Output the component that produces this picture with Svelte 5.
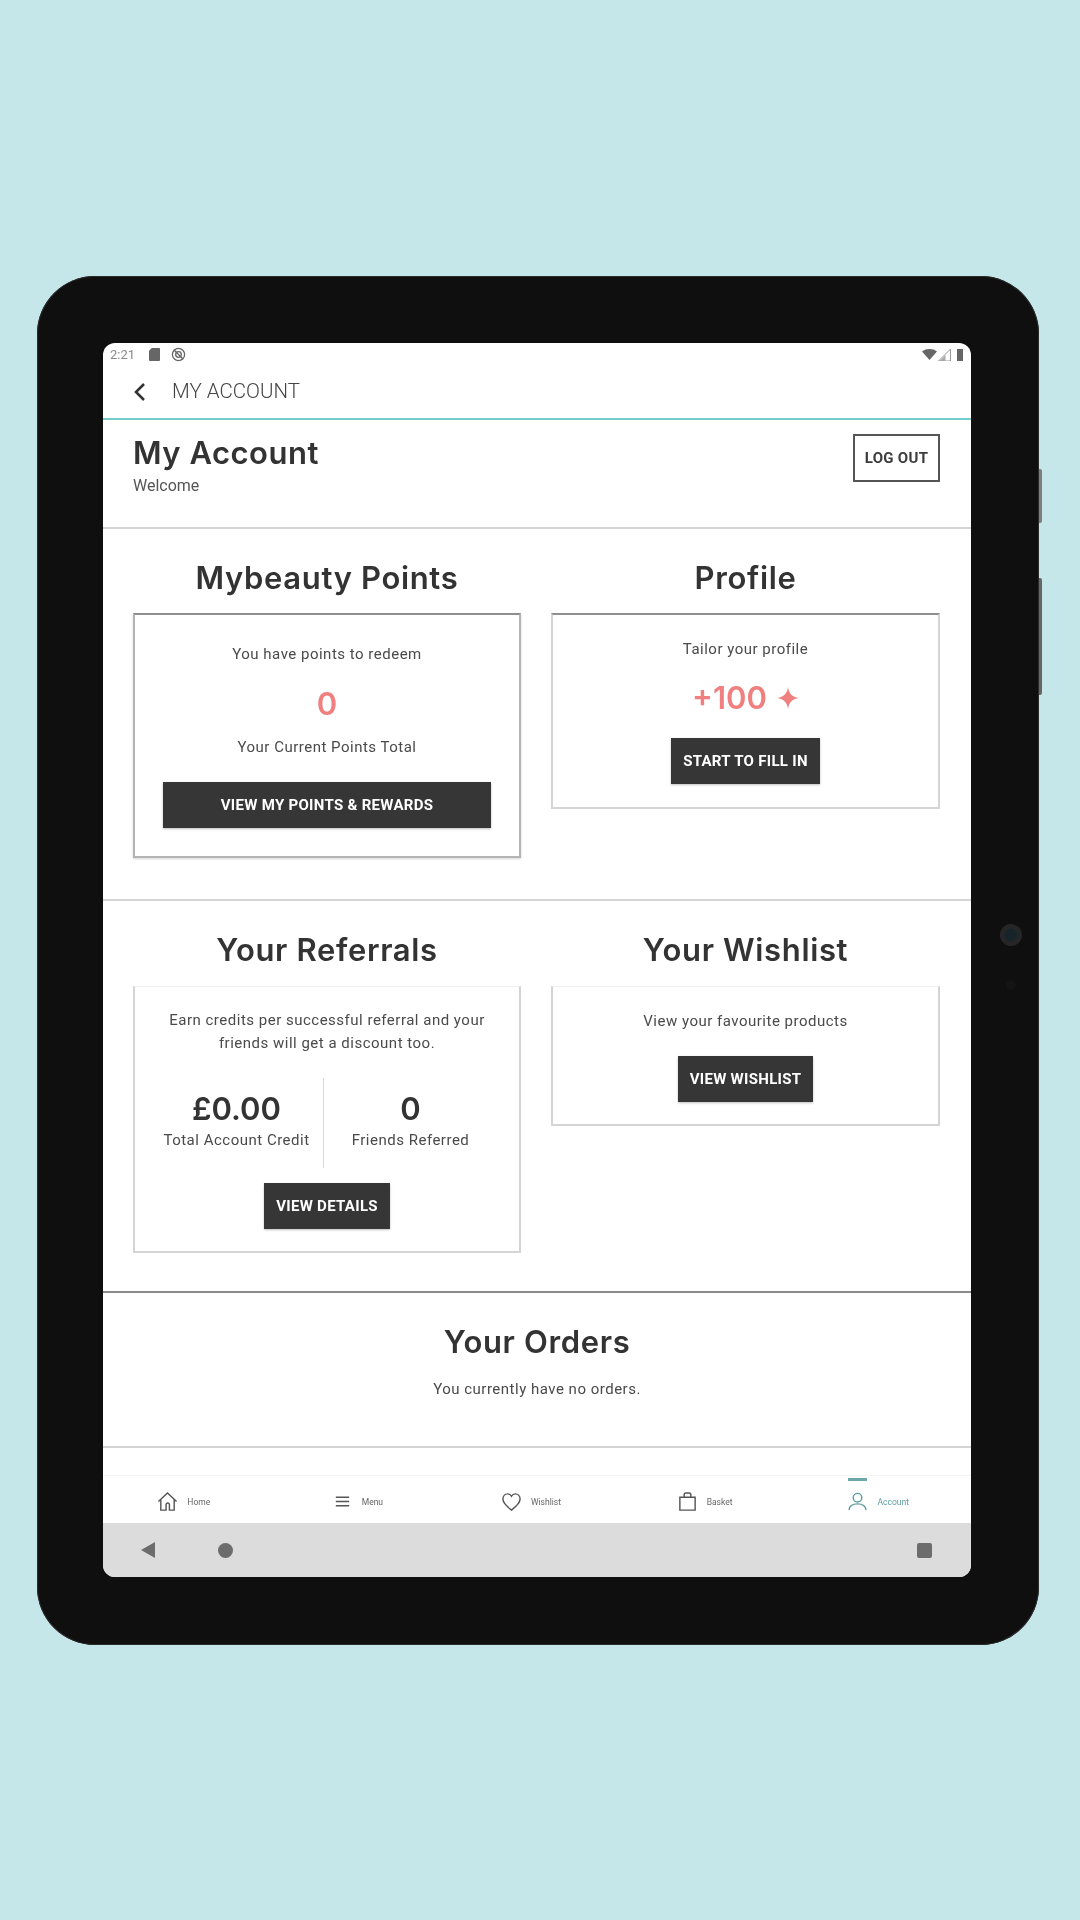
<script>
  const nav = [
    { label: 'Home', d: 'M1.500 11 11 2l9.500 9M4 9v11h5.500v-6a1.800 1.800 0 0 1 3.500 0v6H18V9' },
    { label: 'Menu', d: 'M4 6.500h14M4 11h14M4 15.500h14' },
    { label: 'Wishlist', d: 'M11 20C5 15.500 2 12.500 2 8.500 2 5 4.500 3 7 3c1.800 0 3.200 1 4 2.500C11.800 4 13.200 3 15 3c2.500 0 5 2 5 5.500 0 4-3 7-9 11.500Z' },
    { label: 'Basket', d: 'M3 6.500h16V20H3ZM7.500 6.500V4a2 2 0 0 1 2-2h3a2 2 0 0 1 2 2v2.500' },
    { label: 'Account', d: 'M11 2.500a4.500 4.500 0 1 0 0 9 4.500 4.500 0 0 0 0-9ZM2 20c.5-4.500 4-6.500 9-6.500s8.500 2 9 6.500', active: true }
  ];
</script>

<div class="page">
  <div class="tablet">
    <span class="key key-a"></span>
    <span class="key key-b"></span>
    <span class="lens"></span>
    <span class="sensor"></span>

    <div class="screen">
      <div class="status">
        <span class="time">2:21</span>
        <svg class="st sd" viewBox="0 0 12 14"><path d="M3 0h8a1 1 0 0 1 1 1v12a1 1 0 0 1-1 1H1a1 1 0 0 1-1-1V3Z" /></svg>
        <svg class="st circ" viewBox="0 0 16 16"><circle cx="8" cy="8" r="6.500" /><circle cx="8" cy="8" r="3" /><path d="m3 3 10 10" /></svg>
        <span class="spacer"></span>
        <svg class="st wifi" viewBox="0 0 15 11"><path d="M0 2.500C4-.8 11-.8 15 2.500L7.500 11Z" /></svg>
        <svg class="st signal" viewBox="0 0 12 12"><path d="M12 0v12H0Z" fill="none" stroke="#9a9a9a" stroke-width="1" /><path d="M7 12V6l-6 6Z" fill="#aaa" /></svg>
        <svg class="st batt" viewBox="0 0 8 13"><path d="M1 1h6v12H1Z" /></svg>
      </div>

      <div class="appbar">
        <svg class="back" viewBox="0 0 14 20"><path d="M11 2 3 10l8 8" /></svg>
        <span>MY ACCOUNT</span>
      </div>

      <div class="main">
        <header class="head">
          <div>
            <h1>My Account</h1>
            <p>Welcome</p>
          </div>
          <button class="logout">LOG OUT</button>
        </header>

        <section class="duo points">
          <div class="col">
            <h2>Mybeauty Points</h2>
            <div class="card strong shadow c-points">
              <p>You have points to redeem</p>
              <div class="big">0</div>
              <p>Your Current Points Total</p>
              <button class="dark wide">VIEW MY POINTS &amp; REWARDS</button>
            </div>
          </div>
          <div class="col">
            <h2>Profile</h2>
            <div class="card strong c-profile">
              <p>Tailor your profile</p>
              <div class="big plus">
                +100
                <svg viewBox="0 0 20 20"><path d="M10 0c.8 6 3.500 9 10 10-6.500 1-9.200 4-10 10-.8-6-3.500-9-10-10C6.500 9 9.200 6 10 0Z" /></svg>
              </div>
              <button class="dark">START TO FILL IN</button>
            </div>
          </div>
        </section>

        <section class="duo refs">
          <div class="col">
            <h2>Your Referrals</h2>
            <div class="card c-refs">
              <p class="lines">Earn credits per successful referral and your<br />friends will get a discount too.</p>
              <div class="stats">
                <div class="stat">
                  <strong>£0.00</strong>
                  <span>Total Account Credit</span>
                </div>
                <div class="stat">
                  <strong>0</strong>
                  <span>Friends Referred</span>
                </div>
              </div>
              <button class="dark">VIEW DETAILS</button>
            </div>
          </div>
          <div class="col">
            <h2>Your Wishlist</h2>
            <div class="card c-wish">
              <p>View your favourite products</p>
              <button class="dark">VIEW WISHLIST</button>
            </div>
          </div>
        </section>

        <section class="orders">
          <h2>Your Orders</h2>
          <p>You currently have no orders.</p>
        </section>
      </div>

      <nav class="nav">
        {#each nav as item}
          <div class="item" class:active={item.active}>
            <svg viewBox="0 0 22 22"><path d={item.d} /></svg>
            <span>{item.label}</span>
          </div>
        {/each}
      </nav>

      <div class="sysbar">
        <svg class="tri" viewBox="0 0 14 16"><path d="M14 0v16L0 8Z" /></svg>
        <span class="dot"></span>
        <span class="spacer"></span>
        <span class="sq"></span>
      </div>
    </div>
  </div>
</div>

<style>
  :global(body) {
    margin: 0;
    background: #c5e7e9;
  }

  .page {
    width: 1080px;
    height: 1920px;
    background: #c5e7e9;
    padding: 276px 0 0 37px;
    box-sizing: border-box;
    font-family: Roboto, sans-serif;
    color: #4a4a4a;
    overflow: hidden;
  }

  .tablet {
    position: relative;
    width: 1002px;
    height: 1369px;
    box-sizing: border-box;
    padding: 67px 68px 68px 66px;
    border-radius: 58px;
    background: #0f0f0f;
    box-shadow: inset 0 0 0 1px #2b2b2b;
  }

  .key {
    position: absolute;
    right: -3px;
    width: 3px;
    border-radius: 0 2px 2px 0;
  }
  .key-a { top: 193px; height: 54px; background: #7d7d7d; }
  .key-b { top: 302px; height: 117px; background: #666; }

  .lens {
    position: absolute;
    left: 963px;
    top: 648px;
    width: 22px;
    height: 22px;
    border-radius: 50%;
    background: radial-gradient(circle, #17242a 0 38%, #262626 46% 100%);
  }
  .sensor {
    position: absolute;
    left: 969px;
    top: 704px;
    width: 10px;
    height: 10px;
    border-radius: 50%;
    background: #141414;
  }

  .screen {
    height: 100%;
    display: flex;
    flex-direction: column;
    background: #fff;
    border-radius: 12px;
    overflow: hidden;
    filter: blur(0.6px);
  }

  .spacer { flex: 1; }

  .status {
    height: 23px;
    flex: none;
    display: flex;
    align-items: center;
    padding: 0 7px;
    color: #8a8a8a;
    font-size: 13px;
  }
  .status .time { margin-right: 14px; }
  .st { display: block; fill: #666; }
  .sd { width: 11px; height: 13px; margin-right: 11px; }
  .circ { width: 15px; height: 15px; fill: none; stroke: #666; stroke-width: 1.400; }
  .wifi { width: 15px; height: 11px; margin-right: 1px; }
  .signal { width: 13px; height: 12px; margin-right: 5px; }
  .batt { width: 8px; height: 13px; }

  .appbar {
    flex: none;
    box-sizing: border-box;
    display: flex;
    align-items: flex-start;
    gap: 25px;
    padding: 13px 0 0 30px;
    font-size: 20.500px;
    line-height: 24px;
    font-weight: 300;
    color: #444;
    border-bottom: 2px solid #74cccc;
    height: 54px;
  }
  .back {
    width: 14px;
    height: 20px;
    margin-top: 3px;
    fill: none;
    stroke: #333;
    stroke-width: 2.600;
  }

  .main { flex: 1; min-height: 0; overflow: hidden; }

  .head {
    height: 107px;
    display: flex;
    justify-content: space-between;
    align-items: flex-start;
    padding: 0 31px 0 30px;
    border-bottom: 2px solid #d4d4d4;
  }
  h1 {
    margin: 13px 0 0;
    font: 600 31px/40px Inter, sans-serif;
    letter-spacing: 0.5px;
    color: #333;
  }
  .head p {
    margin: 3px 0 0;
    font-size: 16px;
    color: #555;
  }

  button {
    font: 700 15px Roboto, sans-serif;
    letter-spacing: 0.3px;
    border-radius: 0;
    cursor: pointer;
  }
  .logout {
    margin-top: 14px;
    width: 87px;
    height: 48px;
    padding: 0;
    background: #fff;
    color: #3c3c3c;
    border: 2px solid #555;
  }
  .dark {
    height: 46px;
    padding: 0 12px;
    background: #363636;
    color: #fff;
    border: 0;
    box-shadow: 0 1px 2px #8888;
  }
  .wide { width: 328px; }

  .duo {
    display: grid;
    grid-template-columns: 388px 389px;
    gap: 30px;
    padding: 0 31px 0 30px;
    border-bottom: 2px solid #d4d4d4;
  }
  .points { height: 370px; }
  .refs { height: 390px; border-bottom-color: #8a8a8a; }

  .col { min-width: 0; }
  h2 {
    margin: 0;
    text-align: center;
    font: 600 31px/40px Inter, sans-serif;
    letter-spacing: 0.65px;
    color: #333;
  }
  .col h2 { padding-top: 29px; height: 55px; }
  .refs .col h2 { padding-top: 29px; height: 56px; }

  .card {
    box-sizing: border-box;
    display: flex;
    flex-direction: column;
    align-items: center;
    background: #fff;
    border: 1px solid #d4d4d4;
    border-top-color: #f0f0f0;
    border-left-width: 2px;
    border-right-width: 2px;
    border-bottom-width: 2px;
    font-size: 15px;
    color: #4a4a4a;
    letter-spacing: 0.5px;
  }
  .card.strong { border-top: 2px solid #8f8f8f; }
  .card.shadow { border-color: #b4b4b4; border-top-color: #8f8f8f; box-shadow: 0 1px 2px #9996; }
  .card p { margin: 0; line-height: 20px; text-align: center; }

  .big {
    font: 600 31px/36px Inter, sans-serif;
    letter-spacing: 0;
    color: #f08080;
  }

  .c-points { height: 245px; padding-top: 29px; }
  .c-points .big { margin-top: 22px; }
  .c-points .big + p { margin-top: 15px; }
  .c-points .dark { margin-top: 25px; }

  .c-profile { height: 196px; padding-top: 24px; }
  .plus {
    display: flex;
    align-items: center;
    gap: 10px;
    margin-top: 21px;
  }
  .plus svg { width: 22px; height: 22px; fill: #f08080; }
  .c-profile .dark { margin-top: 22px; }

  .c-refs { height: 267px; padding-top: 22px; }
  .lines { line-height: 23px !important; }
  .stats {
    align-self: stretch;
    display: flex;
    margin-top: 23px;
    height: 90px;
  }
  .stat {
    flex: 1;
    box-sizing: border-box;
    display: flex;
    flex-direction: column;
    align-items: center;
    padding: 13px 22px 0 0;
  }
  .stat:first-child {
    border-right: 1px solid #d8d8d8;
    flex: 0 0 189px;
    padding: 13px 0 0 15px;
    white-space: nowrap;
  }
  .stat strong {
    font: 600 31px/36px Inter, sans-serif;
    letter-spacing: 0;
    color: #333;
  }
  .stat span { margin-top: 4px; }
  .c-refs .dark { margin-top: 15px; }

  .c-wish { height: 140px; padding-top: 24px; }
  .c-wish .dark { margin-top: 25px; }

  .orders {
    height: 155px;
    box-sizing: border-box;
    padding-top: 29px;
    text-align: center;
    border-bottom: 2px solid #d4d4d4;
    font-size: 15px;
    letter-spacing: 0.5px;
    color: #4a4a4a;
  }
  .orders p { margin: 18px 0 0; }

  .nav {
    flex: none;
    height: 48px;
    box-sizing: border-box;
    display: grid;
    grid-template-columns: repeat(5, 1fr);
    padding-top: 4px;
    border-top: 1px solid #f4f4f4;
    background: #fff;
  }
  .item {
    position: relative;
    display: flex;
    align-items: center;
    justify-content: center;
    gap: 9px;
    padding-right: 12px;
    font-size: 8.500px;
    color: #666;
  }
  .item svg {
    width: 21px;
    height: 21px;
    fill: none;
    stroke: #555;
    stroke-width: 1.500;
  }
  .item.active { color: #5f9ea0; }
  .item.active svg { stroke: #5f9ea0; }
  .item.active::before {
    content: '';
    position: absolute;
    left: 51px;
    top: -2px;
    width: 19px;
    height: 3px;
    background: #6fa8aa;
  }

  .sysbar {
    flex: none;
    height: 54px;
    display: flex;
    align-items: center;
    padding: 0 39px 0 38px;
    background: #dcdcdc;
  }
  .tri { width: 14px; height: 16px; fill: #6c6c6c; }
  .dot {
    width: 15px;
    height: 15px;
    margin-left: 63px;
    border-radius: 50%;
    background: #6c6c6c;
  }
  .sq {
    width: 15px;
    height: 15px;
    border-radius: 2px;
    background: #6c6c6c;
  }
</style>
